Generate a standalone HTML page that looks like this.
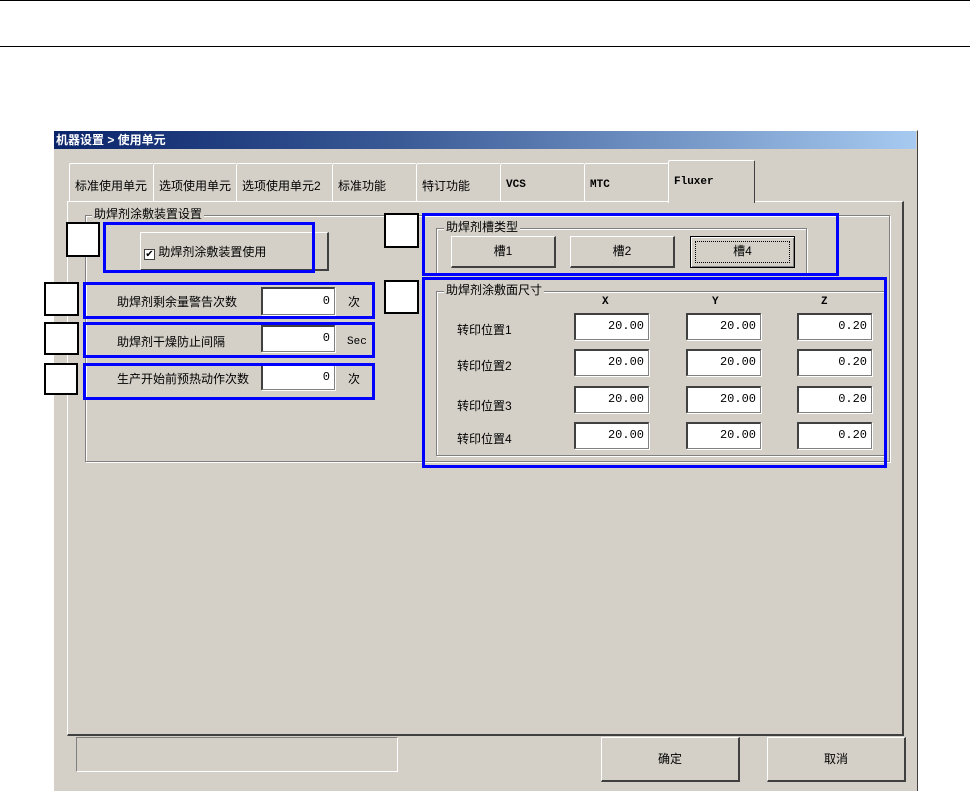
<!DOCTYPE html>
<html><head><meta charset="utf-8">
<style>
*{margin:0;padding:0;box-sizing:border-box}
body{width:970px;height:791px;background:#fff;position:relative;overflow:hidden;font-family:"Liberation Sans","Noto Sans CJK SC","WenQuanYi Zen Hei",sans-serif;font-size:12px;color:#000}
.a{position:absolute}
.hl{position:absolute;left:0;width:970px;height:1px;background:#000}
.win{left:53px;top:130px;width:865px;height:661px;background:#d4d0c8;border:1px solid #fff;border-right-color:#404040;border-bottom:none}
.title{left:54px;top:131px;width:862px;height:18px;background:linear-gradient(90deg,#0a246a,#3a5a96 40%,#a6caf0);color:#fff;font-weight:bold;font-size:12px;line-height:18px;padding-left:2px}
.tab{top:163px;height:39px;border:1px solid #fff;border-right-color:#404040;border-bottom:none;border-radius:2px 2px 0 0;background:#d4d0c8;padding:13px 0 0 5px;font-size:12px;white-space:nowrap;overflow:hidden}
.mono{font-family:"Liberation Mono",monospace;font-size:11px;font-weight:bold}
.panel{left:67px;top:201px;width:837px;height:535px;border:1px solid #fff;border-right:2px solid #404040;border-bottom:2px solid #404040}
.grp{border:1px solid #808080;box-shadow:1px 1px 0 #fff,inset 1px 1px 0 #fff}
.gl{background:#d4d0c8;padding:0 2px;font-size:12px;line-height:14px}
.btn{background:#d4d0c8;border:1px solid #fff;border-right:2px solid #404040;border-bottom:2px solid #404040;text-align:center;font-size:12px}
.inp{background:#fff;border:1px solid #808080;border-top:2px solid #404040;border-left:2px solid #404040;box-shadow:1px 1px 0 #fff;text-align:right;padding-right:4px;font-family:"Liberation Mono",monospace;font-size:12px}
.wb{background:#fff;border:2px solid #000}
.bb{border:3px solid #0000ff}
</style></head><body>
<div class="hl" style="top:0"></div>
<div class="hl" style="top:46px"></div>
<div class="a win"></div>
<div class="a title">机器设置 &gt; 使用单元</div>

<div class="a tab" style="left:69px;width:85px">标准使用单元</div>
<div class="a tab" style="left:153px;width:84px">选项使用单元</div>
<div class="a tab" style="left:236px;width:97px">选项使用单元2</div>
<div class="a tab" style="left:332px;width:85px">标准功能</div>
<div class="a tab" style="left:416px;width:85px">特订功能</div>
<div class="a tab mono" style="left:500px;width:85px;padding-top:15px">VCS</div>
<div class="a tab mono" style="left:584px;width:85px;padding-top:15px">MTC</div>
<div class="a panel"></div>
<div class="a tab mono" style="left:668px;top:160px;width:87px;height:43px;padding-top:15px;z-index:2">Fluxer</div>

<div class="a grp" style="left:85px;top:215px;width:805px;height:247px"></div>
<div class="a gl" style="left:92px;top:207px">助焊剂涂敷装置设置</div>

<div class="a btn" style="left:140px;top:232px;width:189px;height:39px;text-align:left;padding:10px 0 0 3px"><span style="display:inline-block;width:11px;height:11px;background:#fff;border:1px solid #404040;font-size:10px;line-height:9px;text-align:center;vertical-align:-1px">✔</span> 助焊剂涂敷装置使用</div>

<div class="a" style="left:117px;top:293px">助焊剂剩余量警告次数</div>
<div class="a inp" style="left:261px;top:287px;width:74px;height:28px;line-height:24px">0</div>
<div class="a" style="left:348px;top:293px">次</div>
<div class="a" style="left:117px;top:333px">助焊剂干燥防止间隔</div>
<div class="a inp" style="left:261px;top:325px;width:74px;height:27px;line-height:23px">0</div>
<div class="a mono" style="left:347px;top:336px;font-weight:normal">Sec</div>
<div class="a" style="left:117px;top:370px">生产开始前预热动作次数</div>
<div class="a inp" style="left:261px;top:364px;width:74px;height:26px;line-height:22px">0</div>
<div class="a" style="left:348px;top:370px">次</div>

<div class="a grp" style="left:436px;top:228px;width:371px;height:46px"></div>
<div class="a gl" style="left:444px;top:220px">助焊剂槽类型</div>
<div class="a btn" style="left:451px;top:236px;width:105px;height:32px;line-height:29px">槽1</div>
<div class="a btn" style="left:570px;top:236px;width:105px;height:32px;line-height:29px">槽2</div>
<div class="a btn" style="left:690px;top:236px;width:105px;height:32px;line-height:29px;border:1px solid #000;box-shadow:inset 1px 1px 0 #fff,inset -1px -1px 0 #808080"><div style="position:absolute;left:4px;top:4px;right:4px;bottom:4px;border:1px dotted #000"></div>槽4</div>

<div class="a grp" style="left:436px;top:291px;width:450px;height:165px"></div>
<div class="a gl" style="left:444px;top:283px">助焊剂涂敷面尺寸</div>
<div class="a mono" style="left:602px;top:296px">X</div>
<div class="a mono" style="left:712px;top:296px">Y</div>
<div class="a mono" style="left:821px;top:296px">Z</div>

<div class="a" style="left:457px;top:321px">转印位置1</div>
<div class="a" style="left:457px;top:357px">转印位置2</div>
<div class="a" style="left:457px;top:397px">转印位置3</div>
<div class="a" style="left:457px;top:430px">转印位置4</div>

<div class="a inp" style="left:574px;top:313px;width:75px;height:27px;line-height:23px">20.00</div>
<div class="a inp" style="left:686px;top:313px;width:75px;height:27px;line-height:23px">20.00</div>
<div class="a inp" style="left:797px;top:313px;width:75px;height:27px;line-height:23px">0.20</div>
<div class="a inp" style="left:574px;top:349px;width:75px;height:27px;line-height:23px">20.00</div>
<div class="a inp" style="left:686px;top:349px;width:75px;height:27px;line-height:23px">20.00</div>
<div class="a inp" style="left:797px;top:349px;width:75px;height:27px;line-height:23px">0.20</div>
<div class="a inp" style="left:574px;top:386px;width:75px;height:27px;line-height:23px">20.00</div>
<div class="a inp" style="left:686px;top:386px;width:75px;height:27px;line-height:23px">20.00</div>
<div class="a inp" style="left:797px;top:386px;width:75px;height:27px;line-height:23px">0.20</div>
<div class="a inp" style="left:574px;top:422px;width:75px;height:27px;line-height:23px">20.00</div>
<div class="a inp" style="left:686px;top:422px;width:75px;height:27px;line-height:23px">20.00</div>
<div class="a inp" style="left:797px;top:422px;width:75px;height:27px;line-height:23px">0.20</div>

<div class="a bb" style="left:103px;top:222px;width:212px;height:51px"></div>
<div class="a bb" style="left:83px;top:282px;width:292px;height:37px"></div>
<div class="a bb" style="left:83px;top:322px;width:292px;height:36px"></div>
<div class="a bb" style="left:83px;top:363px;width:292px;height:37px"></div>
<div class="a bb" style="left:422px;top:213px;width:417px;height:63px"></div>
<div class="a bb" style="left:422px;top:277px;width:465px;height:191px"></div>

<div class="a wb" style="left:66px;top:222px;width:34px;height:35px"></div>
<div class="a wb" style="left:44px;top:282px;width:35px;height:34px"></div>
<div class="a wb" style="left:44px;top:322px;width:35px;height:33px"></div>
<div class="a wb" style="left:44px;top:363px;width:34px;height:32px"></div>
<div class="a wb" style="left:384px;top:213px;width:35px;height:35px"></div>
<div class="a wb" style="left:384px;top:280px;width:35px;height:34px"></div>

<div class="a" style="left:76px;top:737px;width:322px;height:35px;border:1px solid #808080;border-right-color:#fff;border-bottom-color:#fff"></div>
<div class="a btn" style="left:601px;top:737px;width:139px;height:45px;line-height:42px">确定</div>
<div class="a btn" style="left:767px;top:737px;width:139px;height:45px;line-height:42px">取消</div>
</body></html>
